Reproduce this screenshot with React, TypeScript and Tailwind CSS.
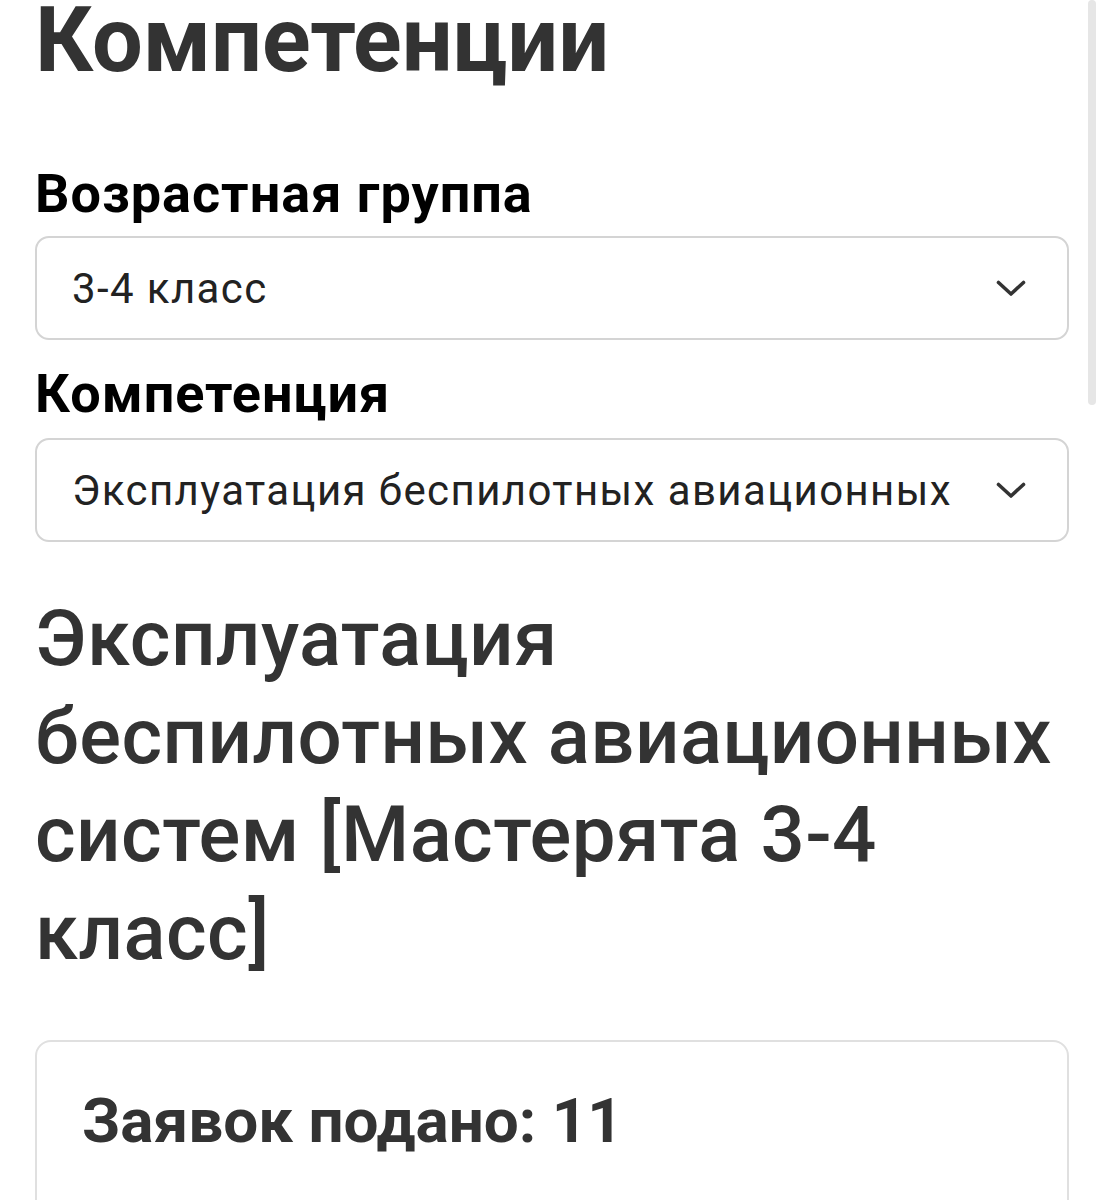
function Chevron() {
  return (
    <svg width="30" height="17" viewBox="0 0 30 17" fill="none" className="shrink-0">
      <path d="M2.5 2.5 L15 14 L27.5 2.5" stroke="#333" strokeWidth="3.6" strokeLinecap="round" strokeLinejoin="round" />
    </svg>
  );
}

function Select({ value }: { value: string }) {
  return (
    <div className="flex items-center h-[104px] border-2 border-[#d4d4d4] rounded-[14px] pl-[35px] pr-[41px] bg-white">
      <span className="flex-1 mr-[32px] overflow-hidden whitespace-nowrap text-[42px] tracking-[1.4px] text-[#222]">{value}</span>
      <Chevron />
    </div>
  );
}

export default function App() {
  return (
    <div className="relative w-[1104px] h-[1200px] overflow-hidden bg-white font-['Roboto',sans-serif]">
      <div className="absolute right-[8px] top-0 w-[8px] h-[405px] rounded-full bg-[#e6e6e6]" />
      <div className="px-[35px]">
        <h1 className="-mt-[4px] text-[90px] leading-[90px] font-bold text-[#333]">Компетенции</h1>

        <p className="mt-[78px] text-[54px] leading-[60px] tracking-[1px] font-bold text-black">Возрастная группа</p>
        <div className="mt-[12px]">
          <Select value="3-4 класс" />
        </div>

        <p className="mt-[24px] text-[54px] leading-[60px] tracking-[1px] font-bold text-black">Компетенция</p>
        <div className="mt-[14px]">
          <Select value="Эксплуатация беспилотных авиационных систем" />
        </div>

        <h2 className="mt-[48px] text-[78px] leading-[98px] tracking-[0.4px] font-medium text-[#333] whitespace-nowrap">
          Эксплуатация
          <br />
          беспилотных авиационных
          <br />
          систем [Мастерята 3-4
          <br />
          класс]
        </h2>

        <div className="mt-[58px] h-[220px] border-2 border-[#e0e0e0] rounded-[16px] pl-[45px] pt-[43px]">
          <p className="text-[62px] leading-[72px] font-bold text-[#333]">Заявок подано: 11</p>
        </div>
      </div>
    </div>
  );
}
